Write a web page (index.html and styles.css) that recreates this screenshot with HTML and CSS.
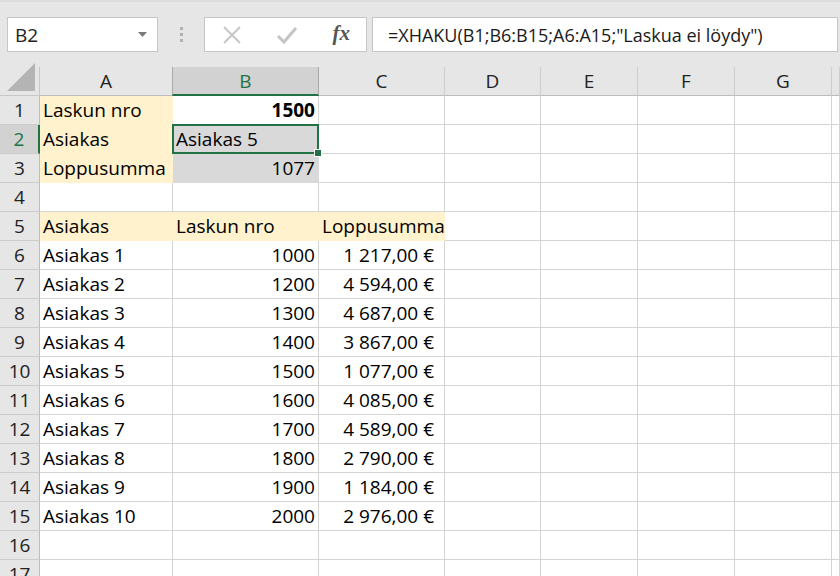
FILE: index.html
```html
<!DOCTYPE html>
<html lang="fi">
<head>
  <meta charset="UTF-8" />
  <title>XHAKU</title>
  <link rel="stylesheet" href="styles.css">
</head>
<body>
  <div class="toolbar">
    <div class="namebox">
      <span>B2</span>
      <svg class="caret" width="9" height="5" viewBox="0 0 9 5"><path d="M0 0h9L4.5 5z" fill="#7a7a7a"/></svg>
    </div>
    <div class="grip"><i></i><i></i><i></i></div>
    <div class="fxbox">
      <svg width="20" height="20" viewBox="0 0 20 20"><path d="M2 2L18 18M18 2L2 18" stroke="#c4c4c4" stroke-width="1.8" fill="none"/></svg>
      <svg width="22" height="20" viewBox="0 0 22 20"><path d="M2 11L8 17L20 3" stroke="#c4c4c4" stroke-width="3" fill="none"/></svg>
      <span class="fx">fx</span>
    </div>
    <div class="formula">=XHAKU(B1;B6:B15;A6:A15;"Laskua ei löydy")</div>
  </div>

  <div class="sheet">
    <div class="corner"><svg width="28" height="28" viewBox="0 0 28 28"><path d="M28 0V28H0z" fill="#b4b4b4"/></svg></div>
    <div class="colhead">A</div>
    <div class="colhead active">B</div>
    <div class="colhead">C</div>
    <div class="colhead">D</div>
    <div class="colhead">E</div>
    <div class="colhead">F</div>
    <div class="colhead">G</div>
    <div class="colhead"></div>

    <div class="rowhead">1</div>
    <div class="cell fill">Laskun nro</div>
    <div class="cell num bold">1500</div>
    <div class="cell"></div><div class="cell"></div><div class="cell"></div><div class="cell"></div><div class="cell"></div><div class="cell"></div>

    <div class="rowhead active">2</div>
    <div class="cell fill">Asiakas</div>
    <div class="cell gray sel">Asiakas 5</div>
    <div class="cell"></div><div class="cell"></div><div class="cell"></div><div class="cell"></div><div class="cell"></div><div class="cell"></div>

    <div class="rowhead">3</div>
    <div class="cell fill">Loppusumma</div>
    <div class="cell num gray">1077</div>
    <div class="cell"></div><div class="cell"></div><div class="cell"></div><div class="cell"></div><div class="cell"></div><div class="cell"></div>

    <div class="rowhead">4</div>
    <div class="cell"></div><div class="cell"></div><div class="cell"></div><div class="cell"></div><div class="cell"></div><div class="cell"></div><div class="cell"></div><div class="cell"></div>

    <div class="rowhead">5</div>
    <div class="cell fill">Asiakas</div>
    <div class="cell fill">Laskun nro</div>
    <div class="cell fill over">Loppusumma</div>
    <div class="cell"></div><div class="cell"></div><div class="cell"></div><div class="cell"></div><div class="cell"></div>

    <div class="rowhead">6</div>
    <div class="cell">Asiakas 1</div><div class="cell num">1000</div><div class="cell eur">1 217,00 €</div>
    <div class="cell"></div><div class="cell"></div><div class="cell"></div><div class="cell"></div><div class="cell"></div>

    <div class="rowhead">7</div>
    <div class="cell">Asiakas 2</div><div class="cell num">1200</div><div class="cell eur">4 594,00 €</div>
    <div class="cell"></div><div class="cell"></div><div class="cell"></div><div class="cell"></div><div class="cell"></div>

    <div class="rowhead">8</div>
    <div class="cell">Asiakas 3</div><div class="cell num">1300</div><div class="cell eur">4 687,00 €</div>
    <div class="cell"></div><div class="cell"></div><div class="cell"></div><div class="cell"></div><div class="cell"></div>

    <div class="rowhead">9</div>
    <div class="cell">Asiakas 4</div><div class="cell num">1400</div><div class="cell eur">3 867,00 €</div>
    <div class="cell"></div><div class="cell"></div><div class="cell"></div><div class="cell"></div><div class="cell"></div>

    <div class="rowhead">10</div>
    <div class="cell">Asiakas 5</div><div class="cell num">1500</div><div class="cell eur">1 077,00 €</div>
    <div class="cell"></div><div class="cell"></div><div class="cell"></div><div class="cell"></div><div class="cell"></div>

    <div class="rowhead">11</div>
    <div class="cell">Asiakas 6</div><div class="cell num">1600</div><div class="cell eur">4 085,00 €</div>
    <div class="cell"></div><div class="cell"></div><div class="cell"></div><div class="cell"></div><div class="cell"></div>

    <div class="rowhead">12</div>
    <div class="cell">Asiakas 7</div><div class="cell num">1700</div><div class="cell eur">4 589,00 €</div>
    <div class="cell"></div><div class="cell"></div><div class="cell"></div><div class="cell"></div><div class="cell"></div>

    <div class="rowhead">13</div>
    <div class="cell">Asiakas 8</div><div class="cell num">1800</div><div class="cell eur">2 790,00 €</div>
    <div class="cell"></div><div class="cell"></div><div class="cell"></div><div class="cell"></div><div class="cell"></div>

    <div class="rowhead">14</div>
    <div class="cell">Asiakas 9</div><div class="cell num">1900</div><div class="cell eur">1 184,00 €</div>
    <div class="cell"></div><div class="cell"></div><div class="cell"></div><div class="cell"></div><div class="cell"></div>

    <div class="rowhead">15</div>
    <div class="cell">Asiakas 10</div><div class="cell num">2000</div><div class="cell eur">2 976,00 €</div>
    <div class="cell"></div><div class="cell"></div><div class="cell"></div><div class="cell"></div><div class="cell"></div>

    <div class="rowhead">16</div>
    <div class="cell"></div><div class="cell"></div><div class="cell"></div><div class="cell"></div><div class="cell"></div><div class="cell"></div><div class="cell"></div><div class="cell"></div>

    <div class="rowhead">17</div>
    <div class="cell"></div><div class="cell"></div><div class="cell"></div><div class="cell"></div><div class="cell"></div><div class="cell"></div><div class="cell"></div><div class="cell"></div>
  </div>
</body>
</html>
```

FILE: styles.css
```css
html, body {
  margin: 0;
  padding: 0;
}
body {
  width: 840px;
  height: 576px;
  overflow: hidden;
  background: #e6e6e6;
  font-family: 'Open Sans', 'Noto Sans', sans-serif;
  color: #000;
}
.toolbar {
  height: 67px;
  box-sizing: border-box;
  padding: 15px 0 0 7px;
  display: flex;
  align-items: flex-start;
  border-top: 2px solid #dcdcdc;
}
.namebox, .fxbox, .formula {
  background: #fff;
  border: 1px solid #c6c6c6;
  height: 35px;
  box-sizing: border-box;
  display: flex;
  align-items: center;
}
.namebox {
  width: 151px;
  padding: 0 10px 0 7px;
  justify-content: space-between;
  font-size: 19px;
  color: #222;
}
.grip {
  width: 46px;
  height: 35px;
  display: flex;
  flex-direction: column;
  align-items: center;
  justify-content: center;
  gap: 3px;
}
.grip i {
  width: 3px;
  height: 3px;
  background: #b2b2b2;
}
.fxbox {
  width: 163px;
  padding: 0 16px 0 17px;
  justify-content: space-between;
}
.fx {
  font-family: 'Liberation Serif', serif;
  font-style: italic;
  font-weight: bold;
  font-size: 21px;
  color: #555;
  margin-top: -3px;
}
.formula {
  margin-left: 5px;
  width: 466px;
  padding-left: 15px;
  font-size: 18px;
  color: #1a1a1a;
}
.sheet {
  display: grid;
  grid-template-columns: 40px 133px 146px 126px 96px 97px 97px 97px 1fr;
  grid-auto-rows: 29px;
  background: #fff;
  font-size: 19px;
}
.corner {
  background: #e6e6e6;
  border-right: 1px solid #c8c8c8;
  border-bottom: 1px solid #c8c8c8;
  box-sizing: border-box;
  display: flex;
  align-items: flex-end;
  justify-content: flex-end;
  padding: 0 4px 4px 0;
}
.colhead {
  background: #e6e6e6;
  border-right: 1px solid #cdcdcd;
  border-bottom: 1px solid #bdbdbd;
  box-sizing: border-box;
  text-align: center;
  line-height: 29px;
  color: #222;
}
.colhead.active {
  background: #d2d2d2;
  border-right-color: #a9a9a9;
  border-left: 1px solid #a9a9a9;
  margin-left: -1px;
  border-bottom: 2px solid #217346;
  color: #217346;
}
.rowhead {
  background: #e6e6e6;
  border-right: 1px solid #bdbdbd;
  border-bottom: 1px solid #cdcdcd;
  box-sizing: border-box;
  text-align: center;
  line-height: 29px;
  color: #222;
}
.rowhead.active {
  background: #d2d2d2;
  border-right: 2px solid #217346;
  color: #217346;
}
.cell {
  border-right: 1px solid #d4d4d4;
  border-bottom: 1px solid #d4d4d4;
  box-sizing: border-box;
  line-height: 29px;
  padding: 0 3px;
  white-space: nowrap;
}
.fill {
  background: #fff2cc;
  border-color: #fff2cc;
}
.over {
  overflow: visible;
}
.gray {
  background: #d9d9d9;
  border-color: #d9d9d9;
}
.num {
  text-align: right;
}
.bold {
  font-weight: bold;
}
.eur {
  text-align: right;
  padding-right: 10px;
}
.sel {
  position: relative;
}
.sel::after {
  content: '';
  position: absolute;
  left: -1px;
  top: -1px;
  right: -1px;
  bottom: -1px;
  border: 2px solid #217346;
}
.sel::before {
  content: '';
  position: absolute;
  right: -4px;
  bottom: -4px;
  width: 6px;
  height: 6px;
  background: #217346;
  border: 1px solid #fff;
  z-index: 2;
}
```
